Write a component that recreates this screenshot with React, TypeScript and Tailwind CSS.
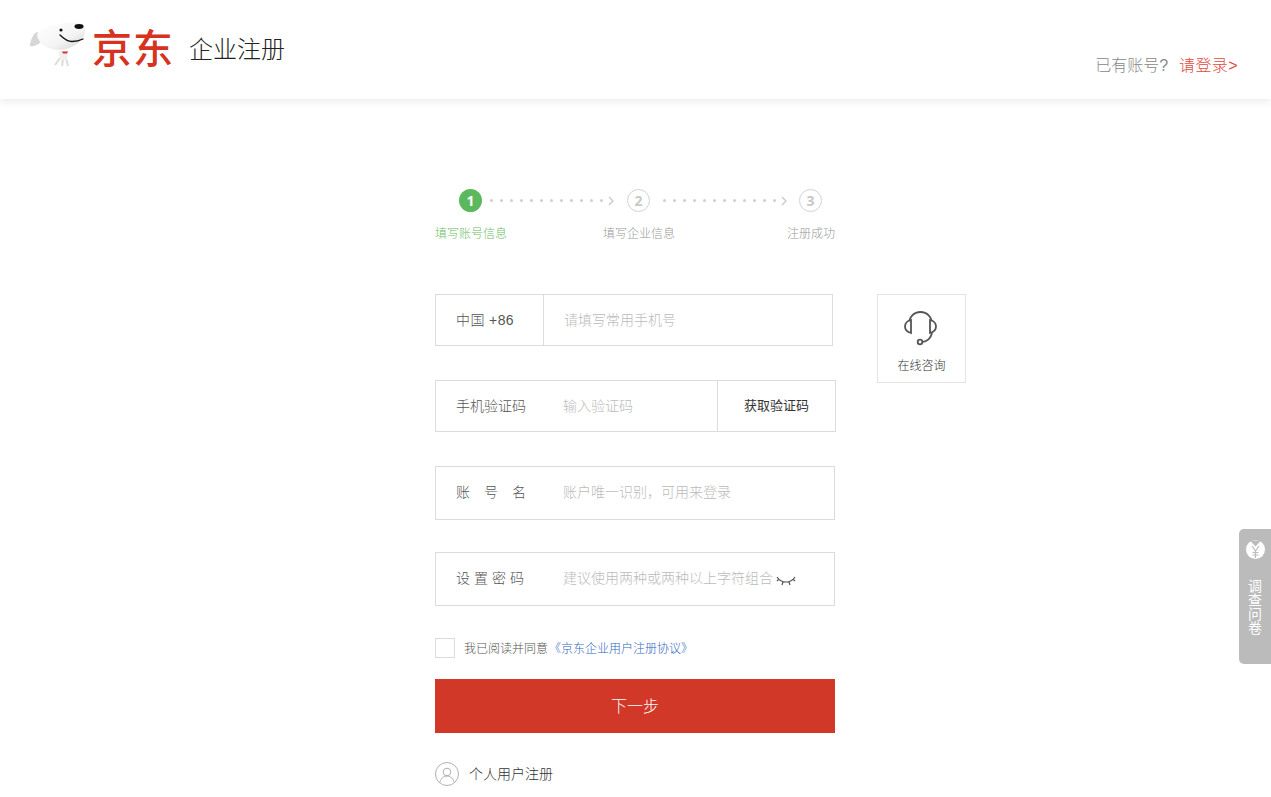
import React from 'react'

const font = { fontFamily: '"Liberation Sans", "Noto Sans CJK SC", sans-serif' }
const digitFont = { fontFamily: '"Open Sans", sans-serif' }

function Mascot() {
  return (
    <svg width="58" height="46" viewBox="0 0 58 46" className="mt-[22px] shrink-0">
      <defs>
        <linearGradient id="head" x1="0" y1="0" x2="1" y2="1">
          <stop offset="0" stopColor="#ffffff" />
          <stop offset="0.6" stopColor="#f4f4f4" />
          <stop offset="1" stopColor="#cfcfcf" />
        </linearGradient>
      </defs>
      <path d="M30 36l-5 7M33 37l-1 7M36 36l2 8" stroke="#dcdcdc" strokeWidth="2" fill="none" />
      <path d="M29 29h9l-1 9h-7z" fill="#efefef" />
      <path d="M32 29.500h6l-1 2h-4z" fill="#d8392b" />
      <path d="M7 10C3 12 0 19 0 24c3 1 8-1 11-4 1-3 0-8-4-10z" fill="#d6d6d6" />
      <path d="M7 13C10 6 24 1 42 1c10-1 14 3 13 9-1 8-9 14-19 17C24 30 9 25 7 13z" fill="url(#head)" />
      <ellipse cx="49" cy="4.500" rx="4.500" ry="2.400" fill="#111" />
      <circle cx="31" cy="8" r="1.600" fill="#111" />
      <path d="M30 13c4 4 8 6.500 12 6.500s8-1 11-2.500" stroke="#111" strokeWidth="1.300" fill="none" strokeLinecap="round" />
    </svg>
  )
}

function Dots() {
  return (
    <div className="flex w-[137px] items-center">
      <div className="flex gap-[7px]">
        {Array.from({ length: 12 }).map((_, i) => (
          <span key={i} className="h-[3px] w-[3px] rounded-full bg-[#cfcfcf]" />
        ))}
      </div>
      <svg width="7" height="10" viewBox="0 0 7 10" className="ml-[5px] shrink-0">
        <path d="M1 1l4 4-4 4" stroke="#c8c8c8" strokeWidth="1.300" fill="none" />
      </svg>
    </div>
  )
}

function Stepper() {
  return (
    <div className="w-[400px]">
      <div className="flex items-center pl-[24px]">
        <span className="flex h-[23px] w-[23px] items-center justify-center rounded-full bg-[#5cb85c] text-[14px] font-bold text-white" style={digitFont}>1</span>
        <div className="ml-[8px]"><Dots /></div>
        <span className="flex h-[23px] w-[23px] items-center justify-center rounded-full border border-[#d2d2d2] text-[14px] font-bold text-[#c8c8c8]" style={digitFont}>2</span>
        <div className="ml-[13px] w-[136px]"><Dots /></div>
        <span className="flex h-[23px] w-[23px] items-center justify-center rounded-full border border-[#d2d2d2] text-[14px] font-bold text-[#c8c8c8]" style={digitFont}>3</span>
      </div>
      <div className="mt-[13px] flex text-[12px] leading-[18px] text-[#999]">
        <span className="w-[168px] text-[#6cbd66]">填写账号信息</span>
        <span className="w-[184px]">填写企业信息</span>
        <span>注册成功</span>
      </div>
    </div>
  )
}

function Field({ label, placeholder, tracking, suffix }: { label: string; placeholder: string; tracking: string; suffix?: React.ReactNode }) {
  return (
    <div className="flex h-[54px] w-[400px] items-center border border-[#dcdcdc] pl-[20px]">
      <span className={`w-[107px] shrink-0 pb-[2px] text-[14px] whitespace-nowrap text-[#555] ${tracking}`}>{label}</span>
      <input readOnly placeholder={placeholder} className="min-w-0 flex-1 pb-[2px] text-[14px] font-light outline-none placeholder:text-[#bbb]" style={font} />
      {suffix}
    </div>
  )
}

export default function App() {
  return (
    <div className="relative min-h-[797px] overflow-hidden bg-white font-light" style={font}>
      {/* Header */}
      <header className="flex h-[99px] items-start justify-between pr-[33px] pl-[30px] shadow-[0_2px_8px_rgba(0,0,0,0.09)]">
        <div className="flex items-start">
          <Mascot />
          <span className="mt-[20px] ml-[4px] text-[40px] leading-[58px] font-medium tracking-[1px] text-[#d6321f]">京东</span>
          <span className="mt-[32px] ml-[15px] text-[24px] leading-[36px] text-[#222]">企业注册</span>
        </div>
        <div className="mt-[54px] flex items-center text-[16px] leading-[24px]">
          <span className="text-[#888]">已有账号?</span>
          <span className="ml-[11px] tracking-[0.4px] text-[#e2483d]">请登录&gt;</span>
        </div>
      </header>

      {/* Main */}
      <main className="pt-[90px] pl-[435px]">
        <Stepper />
        <div className="mt-[51px] flex items-start gap-[42px]">
          <div className="w-[400px]">
            <div className="flex h-[52px] w-[398px] items-center border border-[#dcdcdc] text-[14px]">
              <span className="flex h-full w-[108px] shrink-0 items-center border-r border-[#dcdcdc] pl-[20px] tracking-[0.4px] text-[#555]">中国 +86</span>
              <input readOnly placeholder="请填写常用手机号" className="min-w-0 flex-1 pl-[20px] font-light outline-none placeholder:text-[#bbb]" style={font} />
            </div>

            <div className="mt-[34px] flex h-[52px] w-[401px] items-center border border-[#dcdcdc] pl-[20px]">
              <span className="w-[107px] shrink-0 text-[14px] text-[#555]">手机验证码</span>
              <input readOnly placeholder="输入验证码" className="min-w-0 flex-1 text-[14px] font-light outline-none placeholder:text-[#bbb]" style={font} />
              <span className="flex h-full w-[118px] shrink-0 items-center justify-center border-l border-[#dcdcdc] text-[13px] font-normal text-[#333]">获取验证码</span>
            </div>

            <div className="mt-[34px]">
              <Field label="账号名" placeholder={'账户唯一识别\uFF0C可用来登录'} tracking="tracking-[14px]" />
            </div>
            <div className="mt-[32px]">
              <Field
                label="设置密码"
                placeholder="建议使用两种或两种以上字符组合"
                tracking="tracking-[4px]"
                suffix={
                  <svg width="20" height="10" viewBox="0 0 20 10" className="mt-[3px] mr-[38px] shrink-0">
                    <path d="M1 1c2 3 5 5 9 5s7-2 9-5M3 3L1 5M7 6L6 9M13 6l1 3M17 3l2 2" stroke="#555" strokeWidth="1.200" fill="none" />
                  </svg>
                }
              />
            </div>

            <div className="mt-[32px] flex h-[20px] items-center">
              <span className="h-[20px] w-[20px] shrink-0 border border-[#dcdcdc]" />
              <span className="ml-[9px] pt-[2px] text-[12px] text-[#555]">我已阅读并同意</span>
              <span className="ml-[1px] pt-[2px] text-[12px] text-[#2f66c0]">《京东企业用户注册协议》</span>
            </div>

            <button className="mt-[21px] h-[54px] w-[400px] bg-[#d13828] pt-[2px] text-[16px] text-white" style={font}>下一步</button>

            <div className="mt-[29px] flex items-center">
              <svg width="24" height="24" viewBox="0 0 24 24" className="shrink-0">
                <circle cx="12" cy="12" r="11.500" stroke="#b0b0b0" fill="none" />
                <circle cx="12" cy="10" r="3.800" stroke="#b0b0b0" fill="none" />
                <path d="M5 20c1-4 4-6 7-6s6 2 7 6" stroke="#b0b0b0" fill="none" />
              </svg>
              <span className="ml-[10px] text-[14px] text-[#333]">个人用户注册</span>
            </div>
          </div>

          {/* Online consult */}
          <div className="flex h-[89px] w-[89px] flex-col items-center border border-[#e3e3e3] pt-[15px]">
            <svg width="36" height="36" viewBox="0 0 36 36" className="mr-[2px]">
              <path d="M6 14C6 7 11 2 17.500 2S29 7 29 14M29 23c-1 5-5 9-10 9" stroke="#555" strokeWidth="1.800" fill="none" />
              <path d="M8 10v13C4 22 2 19 2 16.500S4 11 8 10zM27 10v13c4-1 6-4 6-6.500S31 11 27 10z" stroke="#555" strokeWidth="1.800" fill="#fff" />
              <circle cx="17" cy="32" r="2.300" stroke="#555" strokeWidth="1.800" fill="#fff" />
            </svg>
            <span className="mt-[11px] text-[12px] leading-[18px] text-[#333]">在线咨询</span>
          </div>
        </div>
      </main>

      {/* Survey tab */}
      <div className="absolute top-[529px] right-0 flex h-[135px] w-[32px] flex-col items-center rounded-l-[5px] bg-[#bbb] pt-[11px] text-white">
        <svg width="19" height="19" viewBox="0 0 19 19">
          <circle cx="9.500" cy="9.500" r="9.500" fill="#fff" />
          <path d="M4 0.500L9.500 6.500L15 0.500z" fill="#bbb" />
          <path d="M6 6l3.500 5L13 6M9.500 11v7M6.500 12.500h6M6.500 15h6" stroke="#bbb" strokeWidth="1.200" fill="none" />
        </svg>
        <div className="mt-[20px] w-[14px] text-[14px] leading-[14px] font-normal break-all">调查问卷</div>
      </div>
    </div>
  )
}
